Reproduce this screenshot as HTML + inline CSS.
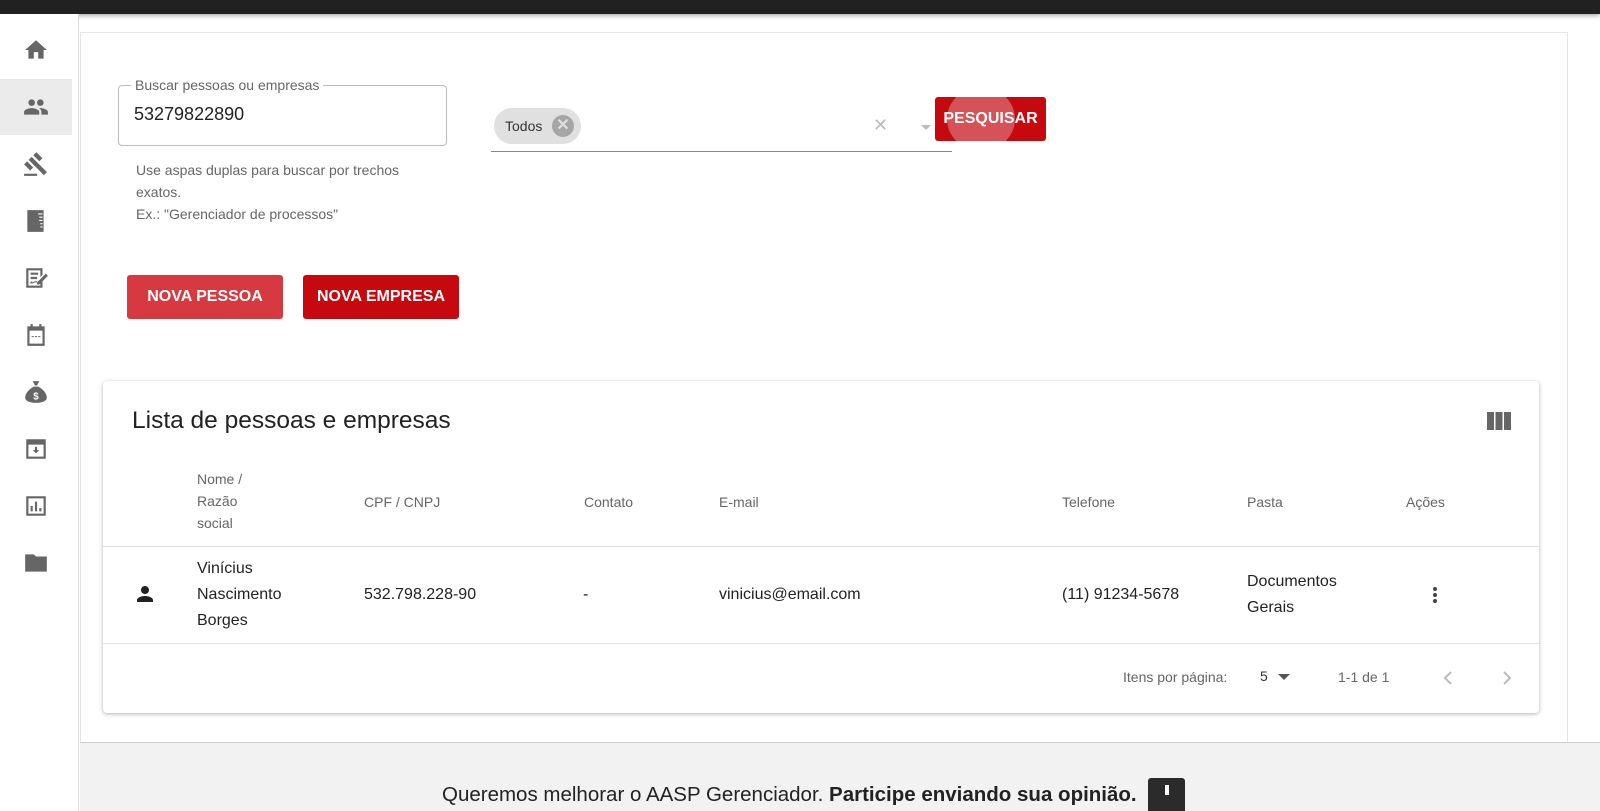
<!DOCTYPE html>
<html><head><meta charset="utf-8"><style>
*{box-sizing:border-box;margin:0;padding:0}
body{width:1600px;height:811px;overflow:hidden;font-family:"Liberation Sans",Roboto,sans-serif;background:#fff;position:relative;color:#212121}
.top{position:absolute;left:0;top:0;width:1600px;height:14px;background:#212121;box-shadow:0 2px 4px rgba(0,0,0,.3)}
.side{position:absolute;left:0;top:14px;width:79px;height:797px;border-right:1px solid #ddd;background:#fff}
.side .it{position:absolute;left:0;width:72px;height:56px;display:flex;align-items:center;justify-content:center}
.side svg{width:26px;height:26px;fill:#666}
.main{position:absolute;left:80px;top:32px;width:1488px;height:710px;border:1px solid #e6e6e6;border-bottom:none;background:#fff}
.abs{position:absolute}
.btn{position:absolute;color:#fff;font-weight:bold;font-size:16px;display:flex;align-items:center;justify-content:center;border-radius:3px}
.card{position:absolute;left:103px;top:381px;width:1436px;height:332px;background:#fff;border-radius:4px;box-shadow:0 1px 4px rgba(0,0,0,.3)}
.th{position:absolute;font-size:14px;color:#666;line-height:22px}
.td{position:absolute;font-size:16px;color:#222;line-height:26px}
.footer{position:absolute;left:80px;top:742px;width:1520px;height:69px;background:#f2f2f2;border-top:1px solid #ccc;overflow:hidden}
</style></head><body>
<div class="top"></div>
<div class="side">
 <div class="it" style="top:8px"><svg viewBox="0 0 24 24"><path d="M10 20v-6h4v6h5v-8h3L12 3 2 12h3v8z"/></svg></div>
 <div class="it" style="top:65px;background:#ebebeb"><svg viewBox="0 0 24 24"><path d="M16 11c1.7 0 3-1.3 3-3s-1.3-3-3-3-3 1.3-3 3 1.3 3 3 3zm-8 0c1.7 0 3-1.3 3-3S9.7 5 8 5 5 6.3 5 8s1.3 3 3 3zm0 2c-2.3 0-7 1.2-7 3.5V19h14v-2.5C15 14.2 10.3 13 8 13zm8 0c-.3 0-.6 0-1 .1 1.2.8 2 2 2 3.4V19h6v-2.5c0-2.3-4.7-3.5-7-3.5z"/></svg></div>
 <div class="it" style="top:122px"><svg viewBox="0 0 24 24"><path d="M1 21h12v2H1zM5.2 8.2l2.8-2.8 14.1 14.1-2.8 2.8zM12.3 1.1l5.6 5.6-2.8 2.8-5.6-5.6zM3.8 9.6l5.6 5.6-2.8 2.8L1 12.4z"/></svg></div>
 <div class="it" style="top:179px"><svg viewBox="0 0 24 24"><path d="M4 2h15v20H4z"/><path fill="#fff" d="M14 5h4v1h-4zm1 3h3v1h-3zm0 3h3v1h-3zm1 3h2v1h-2zm0 3h2v1h-2z"/></svg></div>
 <div class="it" style="top:236px"><svg viewBox="0 0 24 24"><path d="M3 3h15v6l-2 2V5H5v14h11v-2l2-2v6H3zM7 7h7v2H7zm0 4h6v2H7zM6 17l2-2 1 1 2-1h2v1h-2l-2 1zM21 8l2 2-8 8h-2v-2z"/></svg></div>
 <div class="it" style="top:293px"><svg viewBox="0 0 24 24"><path d="M7 2h2v2h6V2h2v2h3v18H4V4h3zm-1 6v12h12V8zm2 5h2v1H8zm3 0h2v1h-2zm3 0h2v1h-2z"/></svg></div>
 <div class="it" style="top:350px"><svg viewBox="0 0 24 24"><path d="M9 2h6l-2 4h-2zM10 7h4c4 2 8 6 8 10 0 3-3 5-10 5S2 20 2 17c0-4 4-8 8-10z"/><text x="12" y="19" font-size="9" font-weight="bold" fill="#fff" text-anchor="middle" font-family="Liberation Sans">$</text></svg></div>
 <div class="it" style="top:407px"><svg viewBox="0 0 24 24"><path d="M3 3h18v18H3zm2 5v11h14V8zm6 2h2v3h2l-3 3-3-3h2z"/></svg></div>
 <div class="it" style="top:464px"><svg viewBox="0 0 24 24"><path d="M3 3h18v18H3zm2 2v14h14V5zm2 7h2v5H7zm4-4h2v9h-2zm4 6h2v3h-2z"/></svg></div>
 <div class="it" style="top:521px"><svg viewBox="0 0 24 24"><path d="M2 4h8l2 2h10v14H2z"/></svg></div>
</div>
<div class="main"></div>
<div class="abs" style="left:118px;top:85px;width:329px;height:61px;border:1px solid #bbb;border-radius:4px"></div>
<div class="abs" style="left:131px;top:77px;background:#fff;padding:0 4px;font-size:14px;color:#666">Buscar pessoas ou empresas</div>
<div class="abs" style="left:134px;top:104px;font-size:18px;color:#222">53279822890</div>
<div class="abs" style="left:136px;top:159px;font-size:14px;color:#666;line-height:22px">Use aspas duplas para buscar por trechos<br>exatos.<br>Ex.: "Gerenciador de processos"</div>
<div class="abs" style="left:491px;top:151px;width:461px;height:1px;background:#888"></div>
<div class="abs" style="left:494px;top:108px;width:87px;height:36px;border-radius:18px;background:#e0e0e0;font-size:14px;color:#333;padding:10px 0 0 11px">Todos</div>
<div class="abs" style="left:552px;top:115px;width:22px;height:22px;border-radius:50%;background:#a6a6a6;color:#e0e0e0;font-size:16px;font-weight:bold;text-align:center;line-height:22px">✕</div>
<div class="abs" style="left:873px;top:115px;color:#bbb;font-size:18px">✕</div>
<div class="abs" style="left:921px;top:125px;width:0;height:0;border:5px solid transparent;border-top-color:#bbb"></div>
<div class="btn" style="left:935px;top:97px;width:111px;height:44px;background:#c5090f;overflow:hidden"><div style="position:absolute;left:12px;top:-10px;width:68px;height:64px;border-radius:50%;background:#d65257"></div><span style="position:relative">PESQUISAR</span></div>
<div class="btn" style="left:127px;top:275px;width:156px;height:44px;background:#d63a40">NOVA PESSOA</div>
<div class="btn" style="left:303px;top:275px;width:156px;height:44px;background:#c5090f">NOVA EMPRESA</div>
<div class="card">
 <div class="abs" style="left:29px;top:26px;font-size:24.5px;color:#222">Lista de pessoas e empresas</div>
 <svg class="abs" style="left:1384px;top:30px" width="24" height="20" viewBox="0 0 24 20"><path fill="#666" d="M0 1h7v18H0zm8.5 0h7v18h-7zM17 1h7v18h-7z"/></svg>
 <div class="th" style="left:94px;top:87px">Nome /<br>Razão<br>social</div>
 <div class="th" style="left:261px;top:110px">CPF / CNPJ</div>
 <div class="th" style="left:481px;top:110px">Contato</div>
 <div class="th" style="left:616px;top:110px">E-mail</div>
 <div class="th" style="left:959px;top:110px">Telefone</div>
 <div class="th" style="left:1144px;top:110px">Pasta</div>
 <div class="th" style="left:1303px;top:110px">Ações</div>
 <div class="abs" style="left:0;top:165px;width:1436px;height:1px;background:#e0e0e0"></div>
 <svg class="abs" style="left:30px;top:201px" width="24" height="24" viewBox="0 0 24 24"><path fill="#222" d="M12 12c2.2 0 4-1.8 4-4s-1.8-4-4-4-4 1.8-4 4 1.8 4 4 4zm0 2c-2.7 0-8 1.3-8 4v2h16v-2c0-2.7-5.3-4-8-4z"/></svg>
 <div class="td" style="left:94px;top:175px">Vinícius<br>Nascimento<br>Borges</div>
 <div class="td" style="left:261px;top:201px">532.798.228-90</div>
 <div class="td" style="left:480px;top:201px">-</div>
 <div class="td" style="left:616px;top:201px">vinicius@email.com</div>
 <div class="td" style="left:959px;top:201px">(11) 91234-5678</div>
 <div class="td" style="left:1144px;top:188px">Documentos<br>Gerais</div>
 <svg class="abs" style="left:1320px;top:202px" width="24" height="24" viewBox="0 0 24 24"><path fill="#444" d="M12 8a2 2 0 100-4 2 2 0 000 4zm0 2a2 2 0 100 4 2 2 0 000-4zm0 6a2 2 0 100 4 2 2 0 000-4z"/></svg>
 <div class="abs" style="left:0;top:262px;width:1436px;height:1px;background:#e0e0e0"></div>
 <div class="abs" style="left:1020px;top:288px;font-size:14px;color:#666">Itens por página:</div>
 <div class="abs" style="left:1157px;top:287px;font-size:14px;color:#333">5</div>
 <div class="abs" style="left:1175px;top:293px;width:0;height:0;border:6px solid transparent;border-top-color:#555"></div>
 <div class="abs" style="left:1235px;top:288px;font-size:14px;color:#666">1-1 de 1</div>
 <svg class="abs" style="left:1333px;top:285px" width="24" height="24" viewBox="0 0 24 24"><path fill="none" stroke="#bbb" stroke-width="2" d="M15 6l-6 6 6 6"/></svg>
 <svg class="abs" style="left:1392px;top:285px" width="24" height="24" viewBox="0 0 24 24"><path fill="none" stroke="#bbb" stroke-width="2" d="M9 6l6 6-6 6"/></svg>
</div>
<div class="footer">
 <div class="abs" style="left:362px;top:40px;font-size:20.5px;color:#222;white-space:nowrap">Queremos melhorar o AASP Gerenciador. <b>Participe enviando sua opinião.</b></div>
 <div class="abs" style="left:1068px;top:35px;width:37px;height:40px;background:#2b2b2b;border-radius:3px"><div style="margin:7px auto;width:4px;height:10px;background:#fff"></div></div>
</div>
</body></html>
